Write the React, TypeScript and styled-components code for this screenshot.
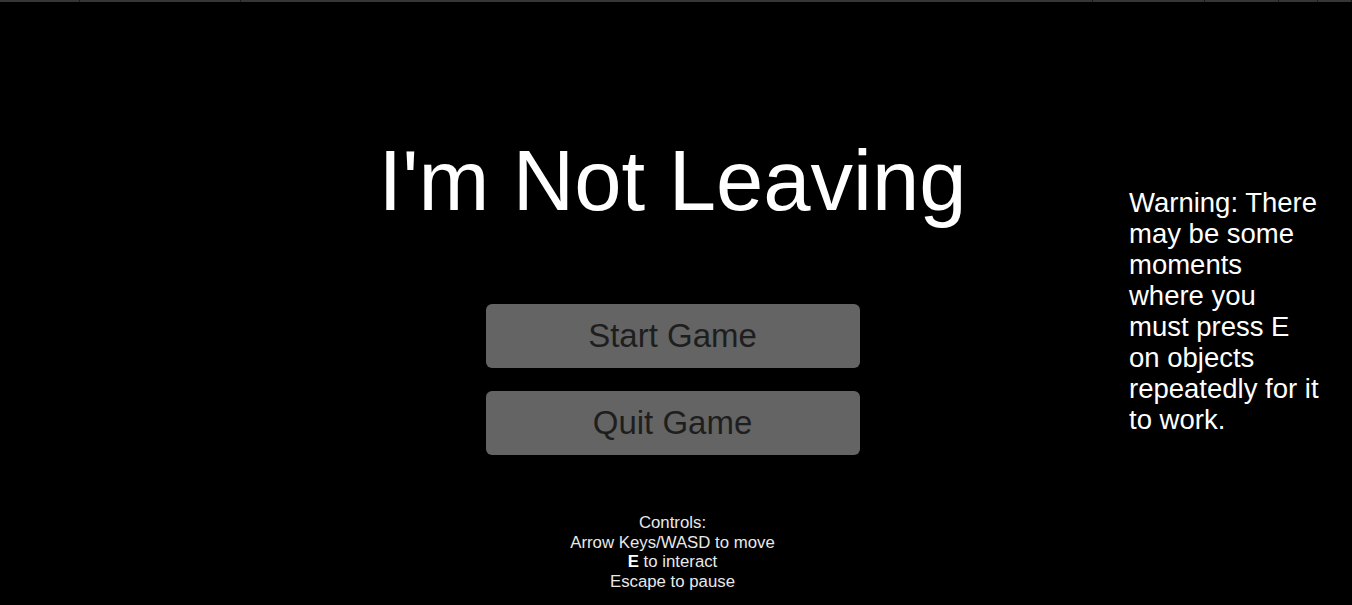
import styled, { createGlobalStyle } from 'styled-components';

const GlobalStyle = createGlobalStyle`
  html, body {
    margin: 0;
    padding: 0;
    background: #000;
  }

  body {
    font-family: "Liberation Sans", Arial, sans-serif;
    overflow: hidden;
  }
`;

// widths of the tab strip cells along the top edge
const tabWidths = [80, 161, 852, 112, 74, 39, 34];

const Menu = () => {
  return (
    <Screen>
      <GlobalStyle />
      <TabStrip>
        {tabWidths.map((w, i) => (
          <Tab key={i} style={{ width: w }} />
        ))}
      </TabStrip>
      <Stage>
        <span />
        <CenterColumn>
          <Title>I'm Not Leaving</Title>
          <ButtonStack>
            <MenuButton>Start Game</MenuButton>
            <MenuButton>Quit Game</MenuButton>
          </ButtonStack>
          <Controls>
            <div>Controls:</div>
            <div>Arrow Keys/WASD to move</div>
            <div><Key>E</Key> to interact</div>
            <div>Escape to pause</div>
          </Controls>
        </CenterColumn>
        <SideNote>
          <Warning>
            Warning: There may be some moments where you must press E on objects repeatedly for it to work.
          </Warning>
        </SideNote>
      </Stage>
    </Screen>
  );
};

export default Menu;

const Screen = styled.div`
  width: 1352px;
  height: 605px;
  background: #000;
  display: flex;
  flex-direction: column;
`;

const TabStrip = styled.div`
  display: flex;
  height: 2px;
  background: #363636;
`;

const Tab = styled.div`
  height: 100%;
  box-sizing: border-box;
  border-right: 1px solid #1c1c1c;
`;

const Stage = styled.div`
  flex: 1;
  display: grid;
  grid-template-columns: 1fr 640px 1fr;
`;

const CenterColumn = styled.div`
  display: flex;
  flex-direction: column;
  align-items: center;
  padding-top: 136px;
  margin-left: -7px;
`;

const Title = styled.h1`
  margin: 0;
  font-size: 85px;
  font-weight: 400;
  line-height: 85px;
  color: #fff;
  white-space: nowrap;
`;

const ButtonStack = styled.div`
  display: flex;
  flex-direction: column;
  gap: 23px;
  margin-top: 81px;
`;

const MenuButton = styled.button`
  width: 374px;
  height: 64px;
  display: flex;
  align-items: center;
  justify-content: center;
  padding: 0;
  border: none;
  border-radius: 6px;
  background: #646464;
  color: #1e1e1e;
  font-family: inherit;
  font-size: 33px;
  cursor: pointer;
`;

const Controls = styled.div`
  margin-top: 58px;
  font-size: 16.8px;
  line-height: 19.5px;
  color: #e9e9e9;
  text-align: center;
`;

const Key = styled.b`
  color: #fff;
`;

const SideNote = styled.div`
  padding-top: 185px;
  padding-left: 133px;
`;

const Warning = styled.p`
  margin: 0;
  width: 192px;
  font-size: 27.5px;
  line-height: 31px;
  color: #fff;
`;
